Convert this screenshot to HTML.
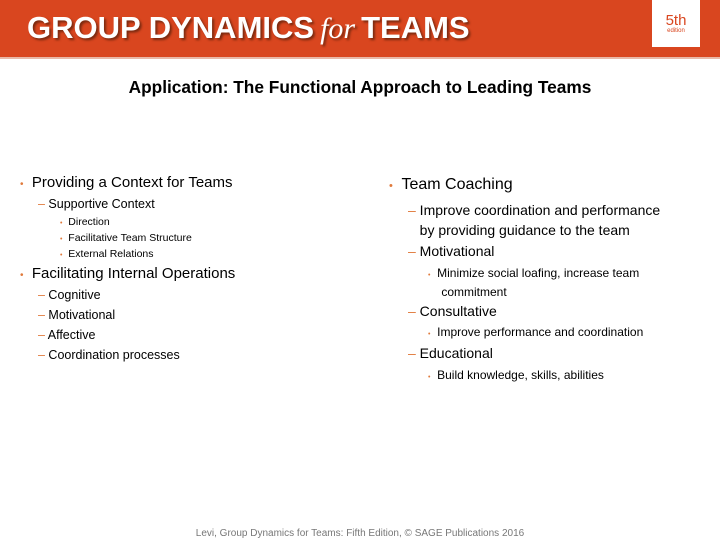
<!DOCTYPE html>
<html><head><meta charset="utf-8"><style>
body{margin:0;width:720px;height:540px;position:relative;background:#fff;font-family:"Liberation Sans",sans-serif;overflow:hidden;color:#000}
.hdr{position:absolute;left:0;top:0;width:720px;height:57px;background:#d9461f;border-bottom:2px solid #e9b8a8}
.logo{position:absolute;left:27px;top:10px;color:#fff;font-weight:bold;font-size:31px;letter-spacing:0px;text-shadow:2px 2px 2px #7a2a10;white-space:nowrap}
.logo i{font-family:"Liberation Serif",serif;font-weight:normal;font-size:30px;margin:0 6px}
.ed{position:absolute;left:652px;top:0;width:48px;height:47px;background:#fff;text-align:center;color:#d9461f}
.ed b{display:block;font-weight:normal;font-size:15px;margin-top:13px;line-height:15px}
.ed span{display:block;font-size:6px}
.t{position:absolute;top:77px;left:0;width:720px;text-align:center;font-weight:bold;font-size:17.3px}
.a{position:absolute;white-space:nowrap}
.b{color:#e07a3c}
.f{position:absolute;top:528px;left:0;width:720px;text-align:center;font-size:10px;color:#777}
</style></head><body>
<div class="hdr"><div class="logo">GROUP DYNAMICS<i>for</i>TEAMS</div><div class="ed"><b>5th</b><span>edition</span></div></div>
<div class="t">Application: The Functional Approach to Leading Teams</div>

<div class="a" style="left:20px;top:174px;font-size:15px"><span class="b" style="font-size:10px">•</span>&nbsp; Providing a Context for Teams</div>
<div class="a" style="left:38px;top:197px;font-size:12.5px"><span class="b">–</span> Supportive Context</div>
<div class="a" style="left:60px;top:216px;font-size:10.5px"><span class="b" style="font-size:7px">•</span>&nbsp; Direction</div>
<div class="a" style="left:60px;top:232px;font-size:10.5px"><span class="b" style="font-size:7px">•</span>&nbsp; Facilitative Team Structure</div>
<div class="a" style="left:60px;top:248px;font-size:10.5px"><span class="b" style="font-size:7px">•</span>&nbsp; External Relations</div>
<div class="a" style="left:20px;top:265px;font-size:15px"><span class="b" style="font-size:10px">•</span>&nbsp; Facilitating Internal Operations</div>
<div class="a" style="left:38px;top:288px;font-size:12.5px"><span class="b">–</span> Cognitive</div>
<div class="a" style="left:38px;top:308px;font-size:12.5px"><span class="b">–</span> Motivational</div>
<div class="a" style="left:38px;top:328px;font-size:12.5px"><span class="b">–</span> Affective</div>
<div class="a" style="left:38px;top:348px;font-size:12.5px"><span class="b">–</span> Coordination processes</div>

<div class="a" style="left:389px;top:176px;font-size:16px"><span class="b" style="font-size:11px">•</span>&nbsp; Team Coaching</div>
<div class="a" style="left:408px;top:200px;font-size:14px;line-height:20px"><span class="b">–</span> Improve coordination and performance<br>&nbsp;&nbsp; by providing guidance to the team</div>
<div class="a" style="left:408px;top:243px;font-size:14px"><span class="b">–</span> Motivational</div>
<div class="a" style="left:428px;top:265px;font-size:12px;line-height:17px"><span class="b" style="font-size:7px">•</span>&nbsp; Minimize social loafing, increase team<br>&nbsp;&nbsp;&nbsp; commitment</div>
<div class="a" style="left:408px;top:303px;font-size:14px"><span class="b">–</span> Consultative</div>
<div class="a" style="left:428px;top:325px;font-size:12px"><span class="b" style="font-size:7px">•</span>&nbsp; Improve performance and coordination</div>
<div class="a" style="left:408px;top:345px;font-size:14px"><span class="b">–</span> Educational</div>
<div class="a" style="left:428px;top:368px;font-size:12px"><span class="b" style="font-size:7px">•</span>&nbsp; Build knowledge, skills, abilities</div>

<div class="f">Levi, Group Dynamics for Teams: Fifth Edition, © SAGE Publications 2016</div>
</body></html>
